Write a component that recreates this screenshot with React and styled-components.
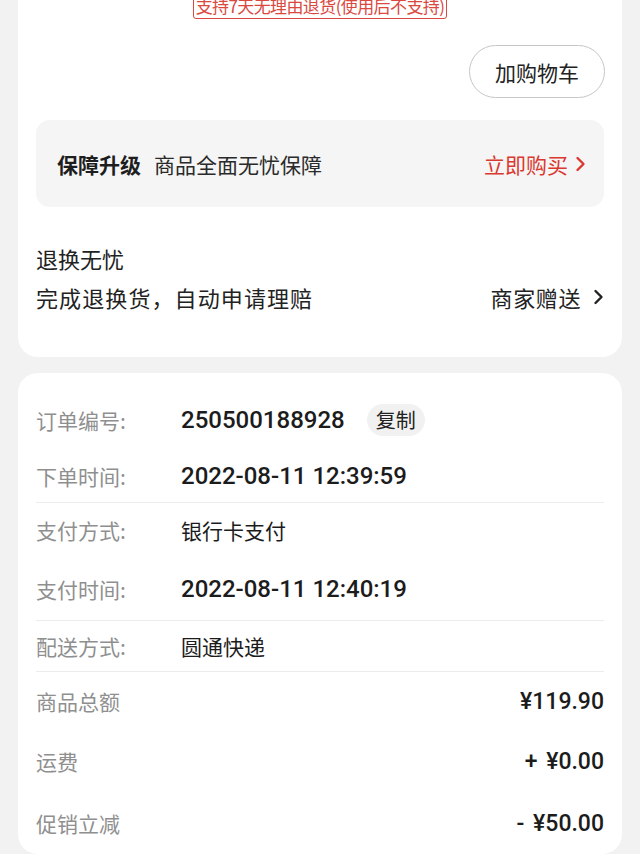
import React from 'react'
import styled, { createGlobalStyle } from 'styled-components'

const GlobalStyle = createGlobalStyle`
  html, body {
    margin: 0;
    padding: 0;
    background: #f2f2f2;
  }
  body {
    font-family: "Noto Sans CJK SC", "Noto Sans", sans-serif;
    color: #222;
    overflow: hidden;
  }
`

const Page = styled.div`
  display: flex;
  flex-direction: column;
  gap: 16px;
  padding: 0 18px;
  margin-top: -31px;
`

const Card = styled.section`
  background: #fff;
  border-radius: 20px;
  padding: ${p => p.$pad || '0 18px'};
  display: flex;
  flex-direction: column;
`

const ReturnBadge = styled.div`
  align-self: center;
  margin-top: 24px;
  border: 1px solid #d9493f;
  border-radius: 3px;
  color: #d9493f;
  font-size: 17px;
  line-height: 24px;
  padding: 0 2px;
  letter-spacing: -0.6px;
`

const ActionRow = styled.div`
  display: flex;
  justify-content: flex-end;
  margin-top: 26px;
`

const OutlineButton = styled.button`
  height: 53px;
  width: 136px;
  border: 1px solid #c6c6c6;
  border-radius: 27px;
  background: #fff;
  font-family: inherit;
  font-size: 21px;
  color: #222;
  margin-right: -1px;
`

const GuardBox = styled.div`
  margin-top: 22px;
  height: 87px;
  background: #f5f5f5;
  border-radius: 14px;
  display: flex;
  align-items: center;
  padding: 0 18px 0 21px;
  font-size: 21px;
`

const GuardTitle = styled.span`
  font-weight: 700;
  color: #1e1e1e;
  margin-right: 13px;
`

const GuardDesc = styled.span`
  color: #2a2a2a;
  flex: 1;
`

const Link = styled.span`
  display: flex;
  align-items: center;
  gap: ${p => p.$gap || 7}px;
  color: ${p => p.$red ? '#d9392f' : '#222'};
  font-size: ${p => p.$size || 21}px;
  letter-spacing: ${p => p.$spread || 0}px;
`

const Chevron = ({ color = '#222' }) => (
  <svg width="11" height="16" viewBox="0 0 11 16">
    <path d="M2.5 2 L8.5 8 L2.5 14" fill="none" stroke={color} strokeWidth="2.4" strokeLinejoin="round" strokeLinecap="round" />
  </svg>
)

const InfoTitle = styled.div`
  margin-top: 36px;
  font-size: 22px;
  line-height: 30px;
  color: #222;
`

const InfoLine = styled.div`
  display: flex;
  justify-content: space-between;
  align-items: center;
  margin-top: 9px;
  margin-bottom: 45px;
  font-size: 22px;
  line-height: 30px;
  color: #222;
  letter-spacing: 1.1px;
`

const Row = styled.div`
  display: flex;
  align-items: center;
  height: ${p => p.$h}px;
  border-bottom: ${p => p.$line ? '1px solid #ececec' : 'none'};
`

const Label = styled.span`
  width: 145px;
  font-size: 21px;
  color: #8f8f8f;
  flex-shrink: 0;
`

const Value = styled.span`
  font-size: ${p => p.$num ? 24 : 21}px;
  font-family: ${p => p.$num ? 'Roboto, "Noto Sans CJK SC", sans-serif' : 'inherit'};
  font-weight: ${p => p.$num ? 500 : 400};
  color: #1c1c1c;
`

const Amount = styled(Value)`
  margin-left: auto;
  font-size: 23px;
  word-spacing: 3px;
`

const CopyPill = styled.span`
  margin-left: 22px;
  background: #f1f1f1;
  border-radius: 16px;
  padding: 0 9px;
  height: 32px;
  line-height: 32px;
  font-size: 20px;
  color: #222;
`

const rows = [
  { label: '订单编号:', value: '250500188928', num: true, h: 58, copy: true },
  { label: '下单时间:', value: '2022-08-11 12:39:59', num: true, h: 53, line: true },
  { label: '支付方式:', value: '银行卡支付', h: 54 },
  { label: '支付时间:', value: '2022-08-11 12:40:19', num: true, h: 63, line: true },
  { label: '配送方式:', value: '圆通快递', h: 50, line: true },
]

const amounts = [
  { label: '商品总额', value: '¥119.90', h: 58 },
  { label: '运费', value: '+ ¥0.00', h: 62 },
  { label: '促销立减', value: '- ¥50.00', h: 62 },
]

export default function App() {
  return (
    <>
      <GlobalStyle />
      <Page>
        <Card>
          <ReturnBadge>支持7天无理由退货(使用后不支持)</ReturnBadge>
          <ActionRow>
            <OutlineButton>加购物车</OutlineButton>
          </ActionRow>
          <GuardBox>
            <GuardTitle>保障升级</GuardTitle>
            <GuardDesc>商品全面无忧保障</GuardDesc>
            <Link $red>
              立即购买
              <Chevron color="#d9392f" />
            </Link>
          </GuardBox>
          <InfoTitle>退换无忧</InfoTitle>
          <InfoLine>
            <span>完成退换货，自动申请理赔</span>
            <Link $size={22} $gap={12} $spread={0.6}>
              商家赠送
              <Chevron />
            </Link>
          </InfoLine>
        </Card>
        <Card $pad="18px 18px 0">
          {rows.map(r => (
            <Row key={r.label} $h={r.h} $line={r.line}>
              <Label>{r.label}</Label>
              <Value $num={r.num}>{r.value}</Value>
              {r.copy && <CopyPill>复制</CopyPill>}
            </Row>
          ))}
          {amounts.map(a => (
            <Row key={a.label} $h={a.h}>
              <Label>{a.label}</Label>
              <Amount $num>{a.value}</Amount>
            </Row>
          ))}
        </Card>
      </Page>
    </>
  )
}
